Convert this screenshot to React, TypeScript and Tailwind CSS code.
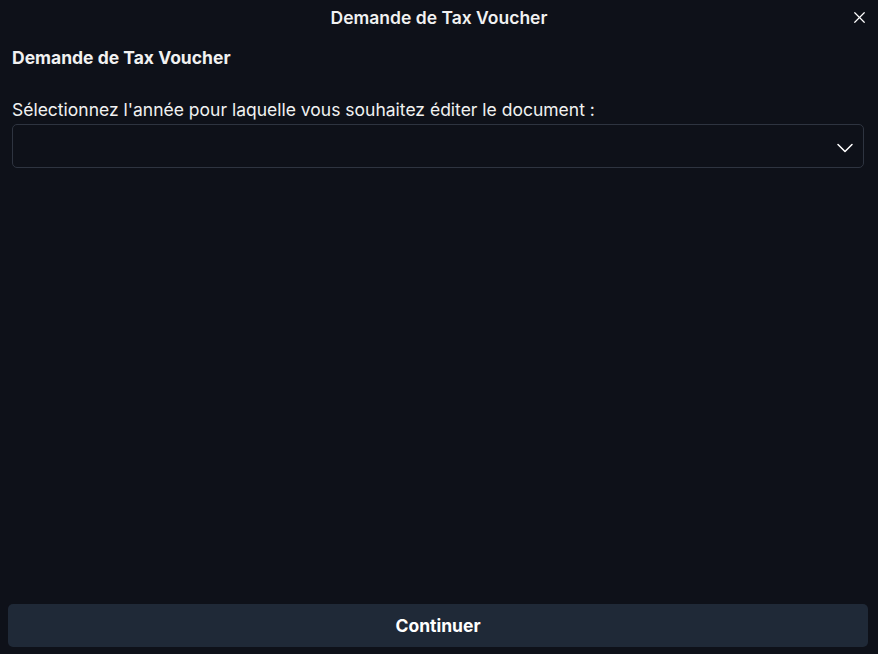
import { X, ChevronDown } from 'lucide-react';

export default function App() {
  return (
    <div
      className="w-[878px] h-[654px] bg-[#0e1119] text-[#f1f1f1] flex flex-col"
      style={{ fontFamily: 'Inter, "Noto Sans", sans-serif' }}
    >
      <div className="relative h-[36px] flex items-center justify-center shrink-0">
        <span className="text-[17.5px] font-semibold">Demande de Tax Voucher</span>
        <button className="absolute right-[9px] top-[8px] text-white">
          <X size={19} strokeWidth={1.5} />
        </button>
      </div>
      <div className="flex-1 px-3 pt-[10px]">
        <h2 className="text-[17.5px] font-bold leading-[24px]">Demande de Tax Voucher</h2>
        <p className="mt-[28px] text-[17.5px] leading-[24px]">
          Sélectionnez l'année pour laquelle vous souhaitez éditer le document :
        </p>
        <div className="mt-[2px] w-[852px] h-[44px] border border-[#2e3440] rounded-[5px] flex items-center justify-end pr-[4px]">
          <ChevronDown size={28} strokeWidth={1.3} className="text-white mt-[3px]" />
        </div>
      </div>
      <div className="px-2 pb-[7px]">
        <button className="w-[860px] h-[43px] rounded-[5px] bg-[#1f2937] text-[17.5px] font-bold text-white pt-[2px]">
          Continuer
        </button>
      </div>
    </div>
  );
}
